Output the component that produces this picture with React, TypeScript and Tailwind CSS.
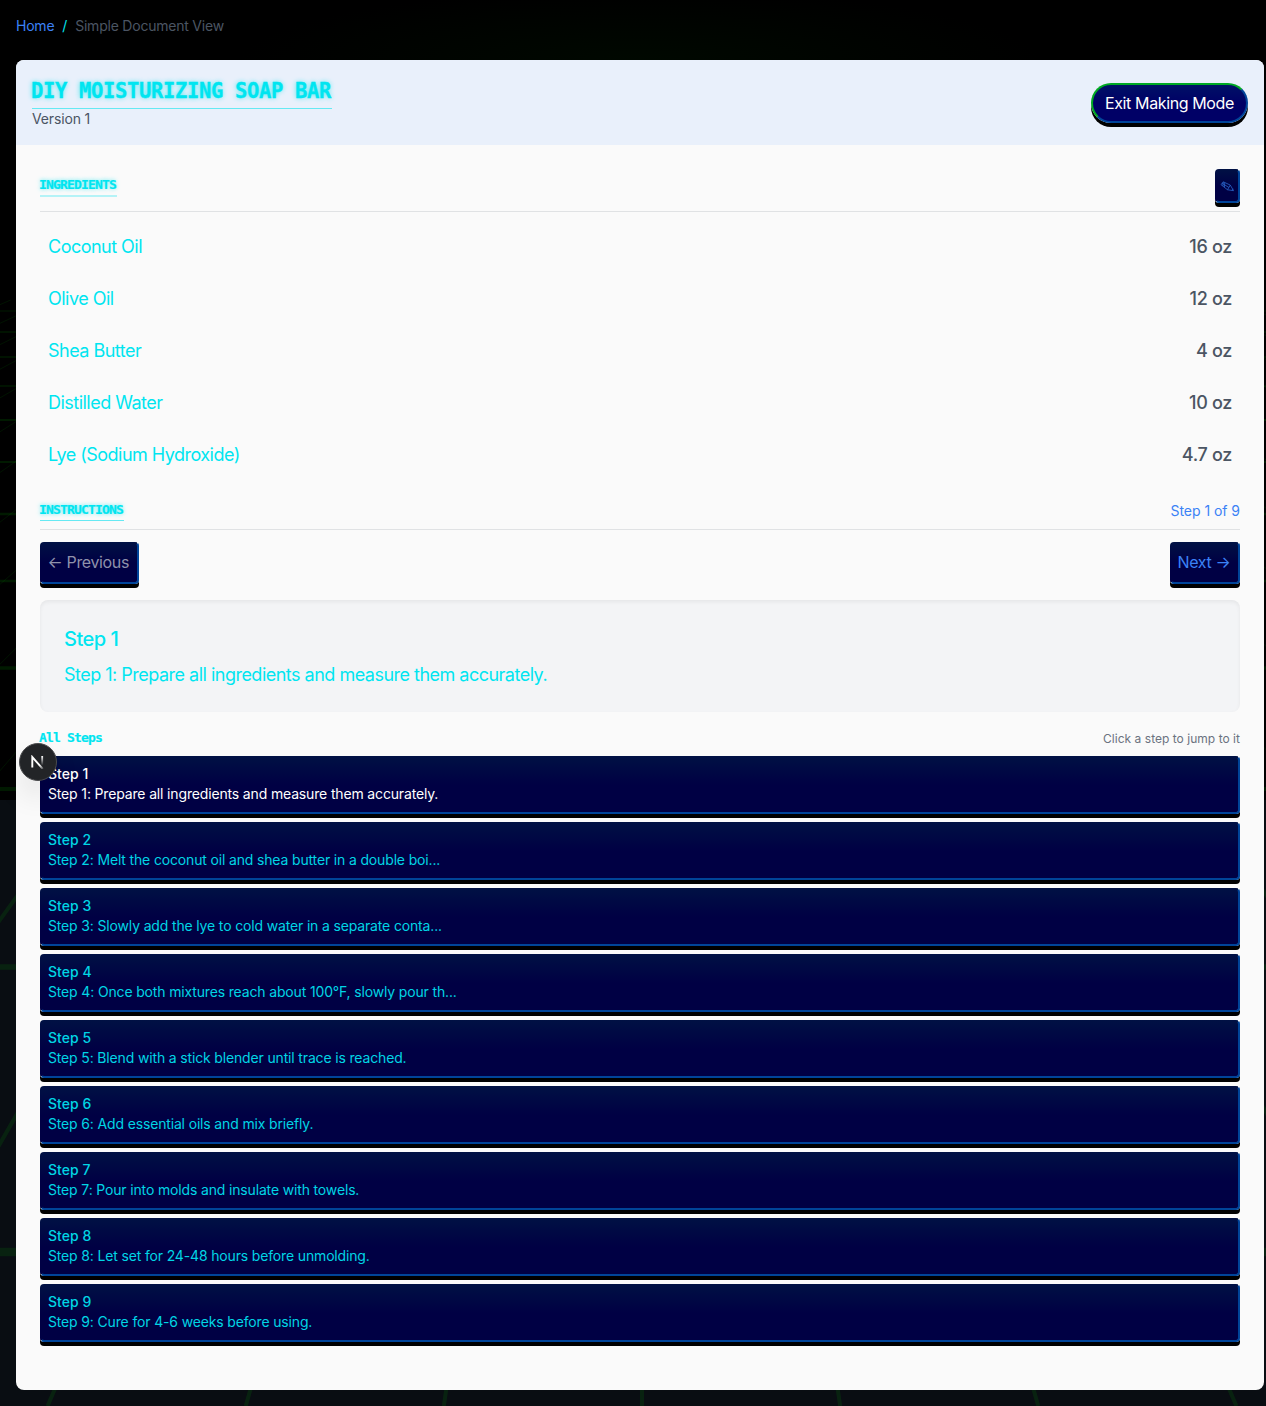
import React from 'react';

const ingredients = [
  ['Coconut Oil', '16 oz'],
  ['Olive Oil', '12 oz'],
  ['Shea Butter', '4 oz'],
  ['Distilled Water', '10 oz'],
  ['Lye (Sodium Hydroxide)', '4.7 oz'],
];

const steps = [
  'Prepare all ingredients and measure them accurately.',
  'Melt the coconut oil and shea butter in a double boi...',
  'Slowly add the lye to cold water in a separate conta...',
  'Once both mixtures reach about 100°F, slowly pour th...',
  'Blend with a stick blender until trace is reached.',
  'Add essential oils and mix briefly.',
  'Pour into molds and insulate with towels.',
  'Let set for 24-48 hours before unmolding.',
  'Cure for 4-6 weeks before using.',
];

const rows = [311, 332, 357, 386, 420, 462, 514, 581, 668, 789, 967, 1252];
const spokes = Array.from({ length: 41 }, (_, i) => i - 20);

const navy =
  'border-2 border-t-transparent border-l-transparent border-r-[#004499] border-b-[#004499] bg-[linear-gradient(180deg,#001144_0%,#000044_50%,#000044_100%)] [background-origin:border-box] shadow-[0_4px_0_#000] rounded';

const smallHeading =
  "font-['DejaVu_Sans_Mono',monospace] text-[13px] leading-5 font-bold tracking-[-0.83px] -indent-px whitespace-nowrap [-webkit-text-stroke:0.2px_#00e5f0]";

function GridBackdrop() {
  return (
    <svg className="absolute inset-0 h-[1406px] w-[1266px]" viewBox="0 0 1266 1406" fill="none">
      <defs>
        <radialGradient id="glow">
          <stop stopColor="#000800" />
          <stop offset="1" stopColor="#000" />
        </radialGradient>
      </defs>
      <rect width="1266" height="800" fill="#000" />
      <ellipse cx="640" cy="60" rx="400" ry="70" fill="url(#glow)" />
      <g stroke="#00ff00">
        {rows.map((y) => (
          <path
            key={y}
            d={`M0 ${y}H1266`}
            strokeWidth={Math.pow((y - 25) / 1227, 1.5) * 8 + 0.3}
            opacity={y > 800 ? 0.09 : 0.1}
          />
        ))}
        {spokes.map((k) => (
          <g key={k}>
            <path
              d={`M${642 + (k * 197 * 275) / 1373} 300L${642 + (k * 197 * 775) / 1373} 800`}
              strokeWidth="1"
              opacity="0.08"
            />
            <path
              d={`M${642 + (k * 197 * 775) / 1373} 800L${642 + (k * 197 * 1381) / 1373} 1406`}
              strokeWidth="4"
              opacity="0.09"
            />
          </g>
        ))}
      </g>
    </svg>
  );
}

export default function App() {
  return (
    <div className="relative h-[1406px] w-[1266px] overflow-hidden bg-[#090d12] font-['Inter',sans-serif] text-[#00e5f0]">
      <GridBackdrop />
      <div className="relative pl-4">
        <nav className="flex h-[60px] gap-2 pt-4 text-sm tracking-[-0.22px]">
          <a className="text-[#3b82f6]">Home</a>
          <span>/</span>
          <span className="text-[#4b5563]">Simple Document View</span>
        </nav>
        <main className="h-[1330px] w-[1248px] overflow-hidden rounded-lg bg-[#fafafa]">
          <header className="flex h-[85px] justify-between bg-[#e9f0fb] px-4">
            <div className="pt-4">
              <h1 className="h-[33px] w-[300px] border-b border-[#66e9f3] pt-px -indent-px font-['DejaVu_Sans_Mono',monospace] text-[20.5px] leading-7 font-bold tracking-[-0.34px] whitespace-nowrap [-webkit-text-stroke:0.3px_#00e5f0] [text-shadow:0_0_5px_#00e5f0aa]">
                DIY MOISTURIZING SOAP BAR
              </h1>
              <p className="text-sm tracking-[-0.15px] text-[#4b5563]">Version 1</p>
            </div>
            <button className="mt-[23px] h-10 w-[157px] rounded-full border-2 border-t-[#00aa22] border-r-[#004499] border-b-[#004499] border-l-[#00aa22] bg-[linear-gradient(180deg,#001166_0%,#000066_50%)] text-base tracking-[-0.38px] whitespace-nowrap text-white shadow-[0_4px_0_#000]">
              Exit Making Mode
            </button>
          </header>

          <div className="px-6 pt-6">
            <section>
              <div className="flex h-[43px] justify-between border-b border-[#e0e2e4]">
                <h2 className={`mt-[6px] h-[22px] w-[77px] border-b-2 border-[#b4f3f7] [text-shadow:0_0_4px_#00e5f0aa] ${smallHeading}`}>
                  INGREDIENTS
                </h2>
                <button className={`flex h-[34px] w-[24.6px] items-center justify-center ${navy}`}>
                  <svg className="mr-[1px] h-[13px] w-[15px] shrink-0" viewBox="0 0 16 14" fill="none" stroke="#2860c4" strokeWidth=".9">
                    <path d="M1 5L3.5 2L11 5.5L14.5 11.5L8 10.5L1 5ZM3.5 2L3 6.5M11 5.5L8 10.5M2 3.5L9.5 8M5 2.7L4.7 7.8M13 11.3L14 9.5" />
                  </svg>
                </button>
              </div>
              <ul className="pt-[9px] text-lg">
                {ingredients.map(([name, qty]) => (
                  <li key={name} className="flex h-[52px] items-center justify-between px-2">
                    <span className="tracking-[-0.52px]">{name}</span>
                    <span className="font-medium tracking-[-0.3px] text-[#4b5563]">{qty}</span>
                  </li>
                ))}
              </ul>
            </section>

            <section className="pt-4">
              <div className="flex h-[33px] justify-between border-b border-[#e0e2e4]">
                <h2 className={`mt-[3px] h-[21px] w-[84px] border-b border-[#66e9f3] [text-shadow:0_0_4px_#00e5f0aa] ${smallHeading}`}>
                  INSTRUCTIONS
                </h2>
                <span className="pt-1 text-sm tracking-[-0.04px] text-[#3b82f6]">Step 1 of 9</span>
              </div>
              <div className="mt-3 flex justify-between">
                <button className={`h-[42px] w-[98.5px] pr-[2px] pb-0.5 pl-0 tracking-[-0.36px] whitespace-nowrap ${navy}`}>
                  <span className="text-[#8f92ab]">← Previous</span>
                </button>
                <button className={`h-[42px] w-[70px] pr-[2px] pb-0.5 pl-0 tracking-[-0.38px] whitespace-nowrap text-[#3b82f6] ${navy}`}>
                  Next →
                </button>
              </div>
              <div className="mt-4 h-[112px] rounded-lg bg-[#f3f4f6] px-6 pt-[25px] shadow-[inset_0_2px_4px_rgba(0,0,0,0.06)]">
                <h3 className="text-xl font-medium tracking-[-0.48px]">Step 1</h3>
                <p className="mt-[7px] text-lg leading-[29px] tracking-[-0.51px]">Step 1: {steps[0]}</p>
              </div>
            </section>

            <section className="pt-4">
              <div className="flex h-7 justify-between">
                <h3 className={smallHeading}>All Steps</h3>
                <span className="pt-[3px] text-xs tracking-[0.03px] text-[#6b7280]">Click a step to jump to it</span>
              </div>
              <div className="flex flex-col gap-2">
                {steps.map((text, i) => (
                  <button key={text} className={`h-[58px] px-1.5 pt-[6px] text-left text-sm ${navy}`}>
                    <span className={`block h-[50px] ${i === 0 ? 'text-white' : 'text-[#00d5e5]'}`}>
                      <span className="block font-medium tracking-[0.05px]">Step {i + 1}</span>
                      <span className="block tracking-[-0.155px]">
                        Step {i + 1}: {text}
                      </span>
                    </span>
                  </button>
                ))}
              </div>
            </section>
          </div>
        </main>
      </div>
      <div className="absolute top-[743px] left-[19px] flex size-[37.5px] items-center justify-center rounded-full border border-[#4a4b4d] bg-[#222427] shadow-[0_16px_32px_-8px_rgba(0,0,0,0.24)]">
        <svg className="h-[14px] w-[13px]" viewBox="0 0 13 14" fill="none">
          <defs>
            <linearGradient id="stem" x1="0" y1="0" x2="0" y2="1">
              <stop stopColor="#fff" />
              <stop offset="1" stopColor="#fff" stopOpacity="0" />
            </linearGradient>
            <linearGradient id="diagonal" x1="1" y1="1" x2="12" y2="14" gradientUnits="userSpaceOnUse">
              <stop offset=".7" stopColor="#fff" />
              <stop offset="1" stopColor="#fff" stopOpacity="0.2" />
            </linearGradient>
          </defs>
          <path d="M1.3 12.5V2L11.8 14" stroke="url(#diagonal)" strokeWidth="1.9" />
          <rect x="10.3" y="1" width="1.8" height="9.5" fill="url(#stem)" />
        </svg>
      </div>
    </div>
  );
}
